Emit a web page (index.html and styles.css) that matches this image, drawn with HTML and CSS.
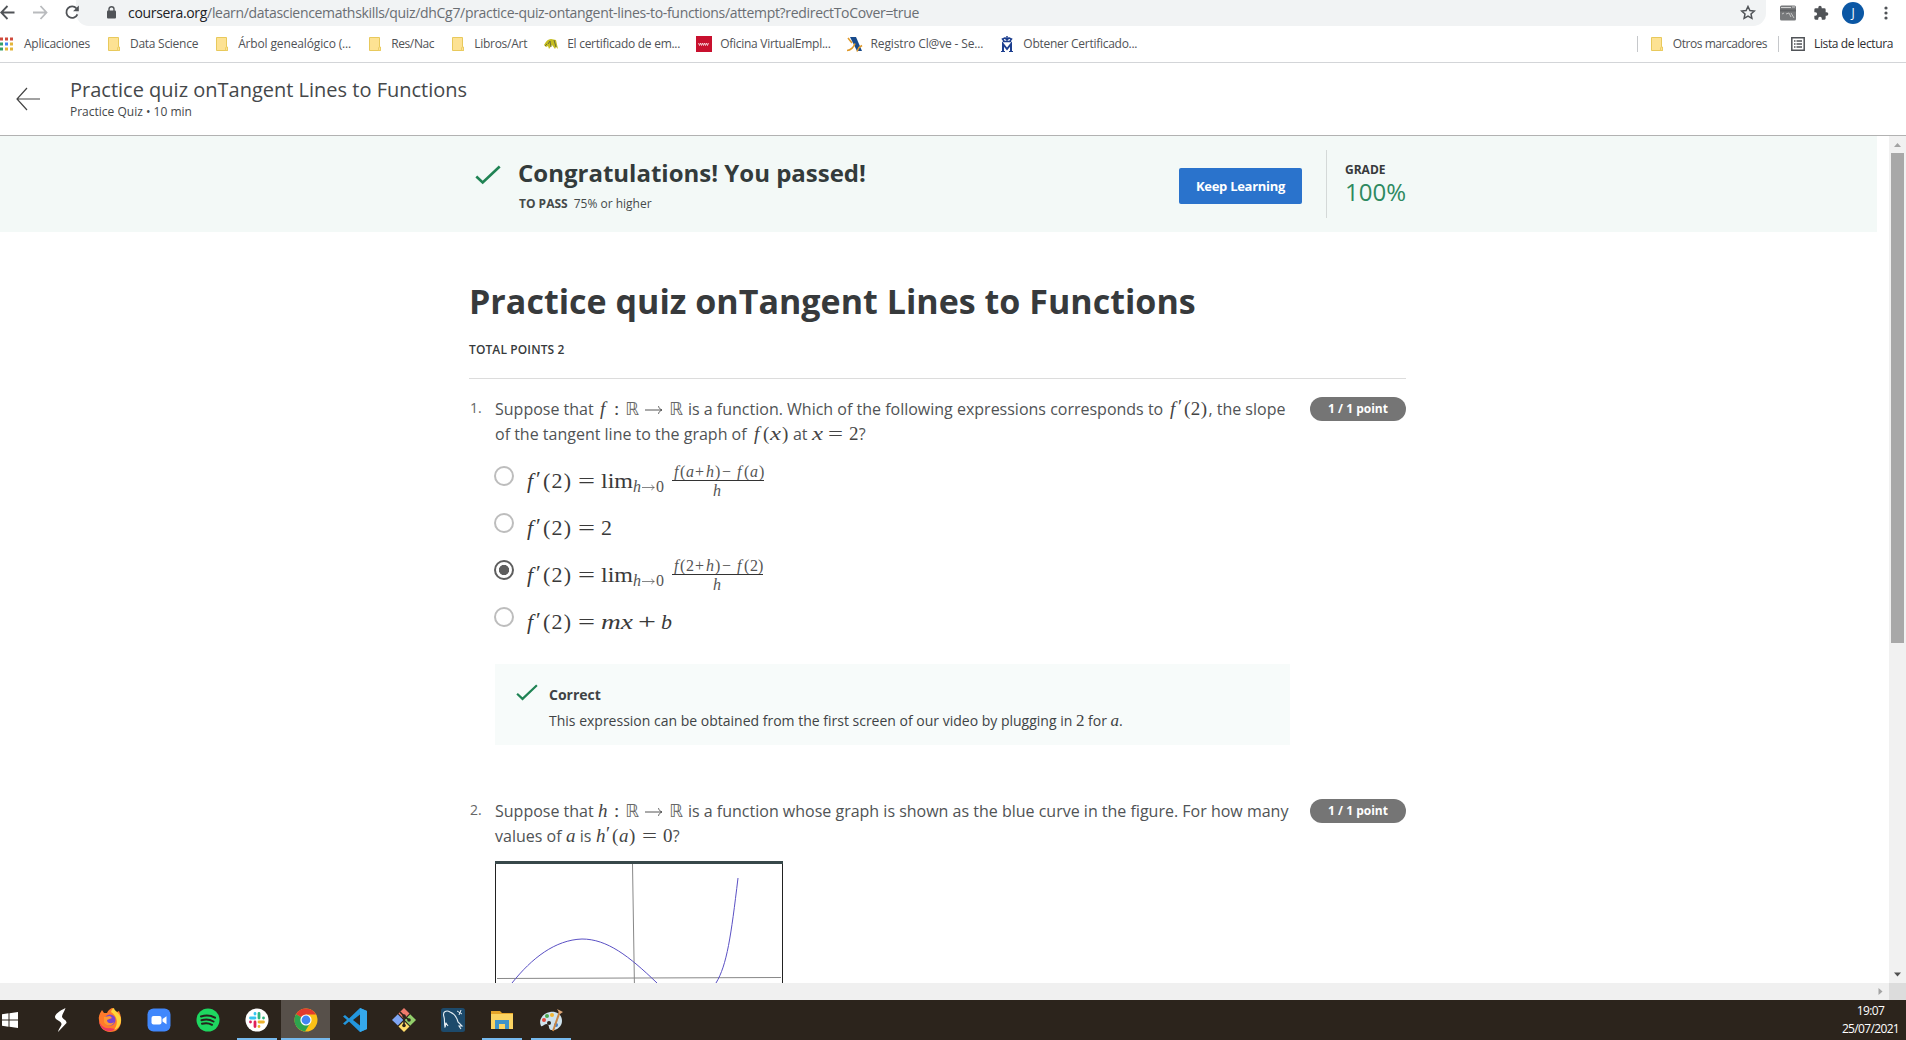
FILE: index.html
```html
<!DOCTYPE html>
<html lang="es">
<head>
<meta charset="utf-8">
<title>Practice quiz onTangent Lines to Functions</title>
<link rel="stylesheet" href="styles.css">
</head>
<body>
<svg class="defs" width="0" height="0">
  <symbol id="folder" viewBox="0 0 16 16"><path d="M2.500 1.500h10v9.500h1v3.500h-11z" fill="#fde293" stroke="#e8c95c"/><path d="M11.500 14.500v-2.500l1-1.500 1 1.500v2.500z" fill="#fde293" stroke="#e8c95c" stroke-width=".8"/></symbol>
  <symbol id="check" viewBox="0 0 26 20"><path d="M1.300 11.500l6.400 6L24.700 1.500" fill="none" stroke="#1f8354" stroke-width="2.600"/></symbol>
  <symbol id="to" viewBox="0 0 18 10"><path d="M0 5h17M13.500 1.200c.5 2 1.800 3.200 3.500 3.800-1.700.6-3 1.800-3.500 3.800" fill="none" stroke="#555" stroke-width="1"/></symbol>
</svg>

<header class="chrome">
  <div class="toolbar">
    <svg class="nav" width="76" height="26" viewBox="0 0 76 26" fill="none" stroke="#505357" stroke-width="1.800">
      <path d="M14.500 12.500H1.500M7.500 6L1.200 12.500l6.300 6.500"/>
      <path d="M33 12.500h13M40.500 6l6 6.500-6 6.500" stroke="#b9bbbe"/>
      <path d="M76.500 8.500A5.700 5.700 0 1 0 77.400 14.300"/>
      <path d="M78.800 5.500v5.700h-5.700z" fill="#505357" stroke="none"/>
    </svg>
    <div class="omnibox">
      <svg width="9" height="13" viewBox="0 0 9 13"><rect x="0" y="4.500" width="9" height="8" rx="1" fill="#505357"/><path d="M2 5V3a2.500 2.300 0 0 1 5 0v2" fill="none" stroke="#505357" stroke-width="1.400"/></svg>
      <span class="url"><b>coursera.org</b>/learn/datasciencemathskills/quiz/dhCg7/practice-quiz-ontangent-lines-to-functions/attempt?redirectToCover=true</span>
      <svg class="star" width="16" height="15" viewBox="0 0 16 15"><path d="M8 1.500l1.900 4 4.400.5-3.300 3 .9 4.400L8 11.200l-3.900 2.200.9-4.400-3.300-3 4.400-.5z" fill="none" stroke="#505357" stroke-width="1.500"/></svg>
    </div>
    <div class="tools">
      <svg width="16" height="16" viewBox="0 0 16 16"><rect y=".5" width="16" height="15" rx="1.500" fill="#77797b"/><path d="M1 2.500h10M12 2h3" stroke="#d2d2d2"/><path d="M0 4.500h16v2H0z" fill="#606265"/><path d="M6 9l3-1 2 4M2 9l2-1M11 8l3 5" fill="none" stroke="#c4c4c4" stroke-width="1"/></svg>
      <svg width="16" height="16" viewBox="0 0 24 24"><path fill="#505357" d="M20.500 11H19V7a2 2 0 0 0-2-2h-4V3.500a2.500 2.500 0 0 0-5 0V5H4a2 2 0 0 0-2 2v3.800h1.500a2.700 2.700 0 0 1 0 5.400H2V20a2 2 0 0 0 2 2h3.800v-1.500a2.700 2.700 0 0 1 5.400 0V22H17a2 2 0 0 0 2-2v-4h1.500a2.500 2.500 0 0 0 0-5z"/></svg>
      <span class="avatar">J</span>
      <svg class="dots" width="4" height="16" viewBox="0 0 4 16" fill="#505357"><circle cx="2" cy="3" r="1.600"/><circle cx="2" cy="8" r="1.600"/><circle cx="2" cy="13" r="1.600"/></svg>
    </div>
  </div>
  <nav class="bookmarks">
    <a class="bm"><svg width="16" height="16" viewBox="0 0 16 16"><g fill="#d04a3c"><path d="M0 1.500h3v3H0zM5 1.500h3v3H5zM10 1.500h3v3h-3z"/></g><path d="M0 6.500h3v3H0z" fill="#34a06a"/><path d="M5 6.500h3v3H5z" fill="#4285f4"/><path d="M10 6.500h3v3h-3zM5 11.500h3v3H5zM10 11.500h3v3h-3z" fill="#e3b53a"/><path d="M0 11.500h3v3H0z" fill="#34a06a"/></svg><span>Aplicaciones</span></a>
    <a class="bm"><svg width="16" height="16"><use href="#folder"/></svg><span>Data Science</span></a>
    <a class="bm loose"><svg width="16" height="16"><use href="#folder"/></svg><span>Árbol genealógico (...</span></a>
    <a class="bm tight"><svg width="16" height="16"><use href="#folder"/></svg><span>Res/Nac</span></a>
    <a class="bm"><svg width="16" height="16"><use href="#folder"/></svg><span>Libros/Art</span></a>
    <a class="bm"><svg width="16" height="16" viewBox="0 0 16 16"><path d="M1 9c2-4 4-6 7-6l5 1 2 9-2-2-1 2-3-4-3 4-1-3-2 1z" fill="#c5bd1e"/><path d="M5 8l2-3 1 6M11 4l2 7M2 10l2-2" stroke="#6d6d3b" fill="none"/></svg><span>El certificado de em...</span></a>
    <a class="bm"><svg width="16" height="16" viewBox="0 0 16 16"><path fill="#c8102e" d="M0 0h16v16H0z"/><path d="M2.500 7l1 2.500 1-2.500 1 2.500 1-2.500 1 2.500 1-2.500 1 2.500 1-2.500 1 2.500 1-2.500" fill="none" stroke="#fff" stroke-width=".7"/></svg><span>Oficina VirtualEmpl...</span></a>
    <a class="bm loose"><svg width="16" height="16" viewBox="0 0 16 16"><path d="M3 1h6l6 14h-5z" fill="#174a8c"/><path d="M1 2l4 5M0 14.500c4 0 7-4 8-7M10 15.500l2-4 3-2" stroke="#e09a2c" stroke-width="1.600" fill="none"/></svg><span>Registro Cl@ve - Se...</span></a>
    <a class="bm"><svg width="16" height="16" viewBox="0 0 16 16" fill="none" stroke="#1d3f8f"><path d="M4 5.500h8M5 5L3.500 3 6 2l2 2 2-2 2.500 1L11 5M8 0v4" stroke-width="1.500"/><path d="M4 15V8l4 5 4-5v7" stroke-width="2"/><path d="M2 15.500h4M10 15.500h4"/></svg><span>Obtener Certificado...</span></a>
    <div class="bm-right">
      <i></i><a class="bm otros"><svg width="16" height="16"><use href="#folder"/></svg><span>Otros marcadores</span></a>
      <i></i><a class="bm tight dark"><svg width="16" height="16" viewBox="0 0 16 16"><path d="M1.800 1.800h12.400v12.400H1.800z" fill="none" stroke="#505357" stroke-width="1.500"/><path d="M4 5h1.500M6.500 5H12M4 8h1.500M6.500 8H12M4 11h1.500M6.500 11H12" stroke="#505357" stroke-width="1.600"/></svg><span>Lista de lectura</span></a>
    </div>
  </nav>
</header>

<header class="quizbar">
  <svg width="24" height="24" viewBox="0 0 24 24" fill="none" stroke="#444" stroke-width="1.200"><path d="M24 12H1M11 1L1 12l10 11"/></svg>
  <div>
    <div class="qb-title">Practice quiz onTangent Lines to Functions</div>
    <div class="qb-sub">Practice Quiz • 10 min</div>
  </div>
</header>

<div class="viewport">
  <main class="page">
    <section class="banner">
      <div class="banner-in">
        <svg class="bcheck" width="26" height="20"><use href="#check"/></svg>
        <div class="bmsg">
          <div class="congrats">Congratulations! You passed!</div>
          <div class="topass"><b>TO PASS</b><span>75% or higher</span></div>
        </div>
        <button class="keep">Keep Learning</button>
        <div class="grade"><b>GRADE</b><span>100%</span></div>
      </div>
    </section>

    <div class="content">
      <h1>Practice quiz onTangent Lines to Functions</h1>
      <div class="total">TOTAL POINTS 2</div>

      <section class="question">
        <span class="num">1.</span>
        <div class="qbody">
          <div class="line">Suppose that <svg class="m" width="86" height="22"><text class="i" x="2" y="16">f</text><text x="16" y="16">:</text><text class="bb" x="27" y="16" textLength="14" lengthAdjust="spacingAndGlyphs">ℝ</text><use href="#to" x="47" y="6" width="18" height="10"/><text class="bb" x="71" y="16" textLength="14" lengthAdjust="spacingAndGlyphs">ℝ</text></svg> is a function. Which of the following expressions corresponds to <svg class="m" width="41" height="22"><text class="i" x="3" y="16">f</text><text x="11" y="14">′</text><text x="17" y="16" textLength="23">(2)</text></svg>, the slope</div>
          <div class="line">of the tangent line to the graph of <svg class="m" width="38" height="22"><text class="i" x="3" y="16">f</text><text x="12" y="16">(</text><text class="i" x="19" y="16" textLength="11" lengthAdjust="spacingAndGlyphs">x</text><text x="31" y="16">)</text></svg> at <svg class="m" width="47" height="22"><text class="i" x="0" y="16" textLength="11" lengthAdjust="spacingAndGlyphs">x</text><text x="16" y="16" textLength="15" lengthAdjust="spacingAndGlyphs">=</text><text x="37" y="16">2</text></svg>?</div>
          <ul class="options">
            <li><span class="radio"></span><svg class="math" width="250" height="40"><text class="i" x="3" y="26">f</text><text x="12" y="24">′</text><text x="19" y="26" textLength="28">(2)</text><text x="54" y="26" textLength="17" lengthAdjust="spacingAndGlyphs">=</text><text x="77" y="26" textLength="32" lengthAdjust="spacingAndGlyphs">lim</text><g class="s"><text class="i" x="109" y="30">h</text><use href="#to" x="118" y="21" width="13" height="9"/><text x="132" y="30">0</text><text class="i" x="150" y="15">f</text><text x="156" y="15">(</text><text class="i" x="162" y="15">a</text><text x="171" y="15">+</text><text class="i" x="182" y="15">h</text><text x="191" y="15">)</text><text x="198" y="15">−</text><text class="i" x="213" y="15">f</text><text x="220" y="15">(</text><text class="i" x="226" y="15">a</text><text x="235" y="15">)</text><text class="i" x="189" y="34">h</text></g><path d="M148 18.500h92" stroke="#333"/></svg></li>
            <li><span class="radio"></span><svg class="math" width="250" height="40"><text class="i" x="3" y="26">f</text><text x="12" y="24">′</text><text x="19" y="26" textLength="28">(2)</text><text x="54" y="26" textLength="17" lengthAdjust="spacingAndGlyphs">=</text><text x="77" y="26">2</text></svg></li>
            <li><span class="radio on"></span><svg class="math" width="250" height="40"><text class="i" x="3" y="26">f</text><text x="12" y="24">′</text><text x="19" y="26" textLength="28">(2)</text><text x="54" y="26" textLength="17" lengthAdjust="spacingAndGlyphs">=</text><text x="77" y="26" textLength="32" lengthAdjust="spacingAndGlyphs">lim</text><g class="s"><text class="i" x="109" y="30">h</text><use href="#to" x="118" y="21" width="13" height="9"/><text x="132" y="30">0</text><text class="i" x="150" y="15">f</text><text x="156" y="15">(</text><text x="162" y="15">2</text><text x="171" y="15">+</text><text class="i" x="182" y="15">h</text><text x="191" y="15">)</text><text x="198" y="15">−</text><text class="i" x="213" y="15">f</text><text x="220" y="15">(</text><text x="226" y="15">2</text><text x="234" y="15">)</text><text class="i" x="189" y="34">h</text></g><path d="M148 18.500h91" stroke="#333"/></svg></li>
            <li><span class="radio"></span><svg class="math" width="250" height="40"><text class="i" x="3" y="26">f</text><text x="12" y="24">′</text><text x="19" y="26" textLength="28">(2)</text><text x="54" y="26" textLength="17" lengthAdjust="spacingAndGlyphs">=</text><text class="i" x="77" y="26" textLength="32" lengthAdjust="spacingAndGlyphs">mx</text><text x="114" y="26" textLength="18" lengthAdjust="spacingAndGlyphs">+</text><text class="i" x="137" y="26">b</text></svg></li>
          </ul>
          <div class="feedback">
            <svg width="22" height="17" viewBox="0 0 26 20" preserveAspectRatio="none"><use href="#check" width="26" height="20"/></svg>
            <div><b>Correct</b><p>This expression can be obtained from the first screen of our video by plugging in <span class="mt">2</span> for <span class="mt i">a</span>.</p></div>
          </div>
        </div>
        <span class="badge">1 / 1 point</span>
      </section>

      <section class="question">
        <span class="num">2.</span>
        <div class="qbody">
          <div class="line">Suppose that <svg class="m" width="86" height="22"><text class="i" x="0" y="16">h</text><text x="16" y="16">:</text><text class="bb" x="27" y="16" textLength="14" lengthAdjust="spacingAndGlyphs">ℝ</text><use href="#to" x="47" y="6" width="18" height="10"/><text class="bb" x="71" y="16" textLength="14" lengthAdjust="spacingAndGlyphs">ℝ</text></svg> is a function whose graph is shown as the blue curve in the figure. For how many</div>
          <div class="line">values of <svg class="m" width="10" height="22"><text class="i" x="0" y="16">a</text></svg> is <svg class="m" width="77" height="22"><text class="i" x="0" y="16">h</text><text x="10" y="14">′</text><text x="16" y="16">(</text><text class="i" x="23" y="16">a</text><text x="33" y="16">)</text><text x="46" y="16" textLength="15" lengthAdjust="spacingAndGlyphs">=</text><text x="67" y="16">0</text></svg>?</div>
          <svg class="figure" width="288" height="160" viewBox="0 0 288 160" fill="none">
            <path d="M.5 0v160M287.500 0v160" stroke="#222"/><path d="M0 1.500h288" stroke="#38484a" stroke-width="3"/>
            <path d="M137.500 3l2.500 157" stroke="#888"/><path d="M2 117.500l284-1" stroke="#888"/>
            <path d="M17 122C37 97 60 79 87 78C112 78 134 95 162 122M221 122C232 104 236 75 243 17" stroke="#5a50c4"/>
          </svg>
        </div>
        <span class="badge">1 / 1 point</span>
      </section>
    </div>
  </main>
  <div class="vscroll"><svg width="17" height="17"><path d="M5 11l3.500-4 3.500 4z" fill="#a3a3a3"/></svg><div class="thumb"></div><svg class="down" width="17" height="17"><path d="M5 6.500l3.500 4 3.500-4z" fill="#505050"/></svg></div>
  <div class="hscroll"><svg width="17" height="17"><path d="M6.500 5l4 3.500-4 3.500z" fill="#a3a3a3"/></svg></div>
  <div class="corner"></div>
</div>

<footer class="taskbar">
  <span class="task win"><svg width="24" height="24" viewBox="0 0 24 24"><path fill="#fff" d="M2 6.300l6.500-1v6.200H2zM9.500 5.200L18 4v7.500H9.500zM2 12.500h6.500v6.200L2 17.700zM9.500 12.500H18V20l-8.500-1.200z"/></svg></span>
  <span class="task"><svg width="24" height="24" viewBox="0 0 24 24" fill="#fff"><path d="M16.500 0C10 3 6 6.500 6 9c0 3 6.500 4 6.500 7 0 2-2.500 4-3.500 8l8.500-9C18 12 13 11 13 8.500c0-2 2.500-5 3.500-8.500z"/></svg></span>
  <span class="task"><svg width="24" height="24" viewBox="0 0 24 24"><path fill="#ff7a2b" d="M1 12C0 7 3 4 4 2l2 3 3 0c1-3 4-5 6-5 0 3 3 3 4 4l2-1c5 11 1 21-9 21C6 24 1 19 1 12z"/><path fill="#ffd43b" d="M13 4c1-3 2-4 3-4 0 3 7 5 7 12 0 6-4 9-7 10 5-7 3-14-3-18z"/><path fill="#f03a5f" d="M1 13c2 5 6 8 11 7l5 1c-6 5-15 1-16-8z"/><circle cx="12" cy="12" r="5.500" fill="#7a45cf"/><path d="M6 9l6-1 2 2-5 2c0 4 5 4 7 2-1 4-8 5-10 0z" fill="#ff9830"/></svg></span>
  <span class="task"><svg width="24" height="24" viewBox="0 0 24 24"><rect x=".5" y=".5" width="23" height="23" rx="6" fill="#4087fc"/><rect x="4.500" y="8" width="10" height="8.500" rx="2" fill="#fff"/><path d="M15.500 11l4-2.800v8l-4-2.700z" fill="#fff"/></svg></span>
  <span class="task"><svg width="24" height="24" viewBox="0 0 24 24"><circle cx="12" cy="12" r="11.500" fill="#1ed760"/><path d="M5 8.500c5-1.500 10-1 14 1.200M5.500 12.300c4.500-1.300 8.500-.8 12 1.200M6 15.800c4-1 7-.7 10 1" fill="none" stroke="#26221c" stroke-width="2" stroke-linecap="round"/></svg></span>
  <span class="task open"><svg width="24" height="24" viewBox="0 0 24 24" stroke-width="2.800" stroke-linecap="round" fill="none"><circle cx="12" cy="12" r="11.500" fill="#fff" stroke="none"/><path d="M10 5.500V6M5.500 10H10" stroke="#36c5f0"/><path d="M14 5.500V10M18.500 10h.01" stroke="#2eb67d"/><path d="M14 14h4.500M14 18.500h.01" stroke="#ecb22e"/><path d="M5.500 14h.01M10 14v4.500" stroke="#e01e5a"/></svg></span>
  <span class="task open active"><svg width="24" height="24" viewBox="0 0 24 24"><circle cx="12" cy="12" r="11.500" fill="#fbc116"/><path d="M12 12L2 6.200A11.500 11.500 0 0 1 22 6.500H12z" fill="#e33b2e"/><path d="M2 6.200A11.500 11.500 0 0 0 11 23.500l5.500-9L12 12z" fill="#2da44e"/><circle cx="12" cy="12" r="5.600" fill="#fff"/><circle cx="12" cy="12" r="4.400" fill="#4285f4"/></svg></span>
  <span class="task"><svg width="24" height="24" viewBox="0 0 24 24"><path d="M17 0l7 3v18l-7 3L6 13.500 2 17l-2-1.500L4 12 0 8.500 2 7l4 3.500z" fill="#2396dd"/><path d="M17 6.500v11L10 12z" fill="#2c241c"/><path d="M17 0l7 3v18l-7 3z" fill="#35a9ee"/></svg></span>
  <span class="task"><svg width="24" height="24" viewBox="0 0 24 24"><path fill="#f07b6c" d="M12 0l5.500 5.500L12 11 6.500 5.500z"/><path fill="#7fa6f5" d="M5.800 6.300L11.300 12l-5.500 5.500L0 12z"/><path fill="#93cf6b" d="M18.200 6.300L24 12l-5.800 5.700-5.500-5.700z"/><path fill="#ffdc6b" d="M12 13l5.500 5.500L12 24l-5.500-5.500z"/><path d="M8 4l4 4v10M12 8l5 4" stroke="#2c241c" stroke-width="1.600" fill="none"/><circle cx="12" cy="17.500" r="1.800" fill="#2c241c"/><circle cx="17" cy="12" r="1.800" fill="#2c241c"/><circle cx="12" cy="8" r="1.800" fill="#2c241c"/></svg></span>
  <span class="task"><svg width="24" height="24" viewBox="0 0 24 24"><rect width="24" height="24" rx="2.500" fill="#1d4a6b"/><path d="M7 18l-2-3c-1 1 0 3-1 4C3 15 4 12 3 9 1 3 6 2 9 4c5 2 7 6 8 10l4 4-3 0 2 3" fill="none" stroke="#e6eef4" stroke-width="1.100"/><path d="M16 3l5 3M20 2l-2 5" stroke="#e6eef4"/></svg></span>
  <span class="task open"><svg width="24" height="24" viewBox="0 0 24 24"><path d="M1 3h9l2 2h11v16H1z" fill="#e6a52a"/><path d="M1 6h22v15H1z" fill="#fcd462"/><path d="M5 12h14v9h-4v-5H9v5H5z" fill="#3f93c9"/></svg></span>
  <span class="task open"><svg width="24" height="24" viewBox="0 0 24 24"><path d="M11 4c7-1 12 3 12 9s-6 10-11 9c-3-1-1-5-4-6-3 0-4 3-6 2C-1 12 4 5 11 4z" fill="#cfe3ee"/><circle cx="5" cy="12" r="2" fill="#e24b3c"/><circle cx="8" cy="8" r="2" fill="#4aa84e"/><circle cx="13" cy="7" r="2" fill="#f2b632"/><circle cx="17" cy="17" r="2" fill="#3d7fd0"/><circle cx="10" cy="15" r="2" fill="#2c241c"/><path d="M21 3l-7 20" stroke="#c98644" stroke-width="2"/><path d="M18 1l6 3-3 2z" fill="#e0a878"/></svg></span>
  <div class="clock"><span>19:07</span><span>25/07/2021</span></div>
</footer>
</body>
</html>
```
FILE: styles.css
```css
* { box-sizing: border-box; }
body { margin: 0; width: 1906px; height: 1040px; overflow: hidden; display: flex; flex-direction: column; background: #fff; color: #373a3c; font-family: "Open Sans", "Noto Sans", sans-serif; }
svg { display: block; flex: none; }
.defs { position: absolute; }

.chrome { height: 63px; border-bottom: 1px solid #d3d5d8; white-space: nowrap; }
.toolbar { display: flex; height: 26px; }
.nav { overflow: visible; z-index: 1; }
.omnibox { width: 1690px; height: 26px; background: #f1f3f4; border-radius: 0 0 13px 13px; display: flex; align-items: center; padding: 0 10px 1px 31px; font-size: 14px; }
.omnibox .url { margin-left: 12px; color: #6a6e73; letter-spacing: -.32px; }
.url b { font-weight: 400; color: #202124; }
.star { margin-left: auto; }
.tools { display: flex; align-items: center; padding-left: 14px; height: 25px; }
.tools svg + svg { margin-left: 17px; }
.avatar { width: 22px; height: 22px; border-radius: 50%; background: #0b57a4; color: #fff; font-size: 12px; line-height: 22px; text-align: center; margin-left: 13px; }
.tools .dots { margin-left: 20px; }
.bookmarks { display: flex; gap: 16px; height: 35px; align-items: center; font-size: 12px; color: #505256; letter-spacing: -.27px; }
.bm { display: flex; gap: 8px; align-items: center; }
.loose { letter-spacing: -.14px; }
.tight { letter-spacing: -.38px; }
.otros { letter-spacing: -.46px; }
.bm-right { margin-left: auto; display: flex; align-items: center; gap: 11px; padding-right: 13px; }
.bm-right i { width: 1px; height: 16px; background: #c6c8cb; }
.dark { color: #2c2d30; }

.quizbar { height: 73px; border-bottom: 1px solid #b2b2b2; display: flex; align-items: center; padding-left: 16px; gap: 30px; }
.qb-title { font-size: 20px; line-height: 24px; color: #45484a; }
.qb-sub { font-size: 12px; line-height: 18px; padding-top: 1px; height: 18px; color: #45484a; }

.viewport { height: 864px; display: grid; grid-template: 847px 17px / 1889px 17px; }
.page { overflow: hidden; padding-right: 12px; }
.banner { background: #f3f9f7; height: 96px; }
.banner-in { width: 937px; margin-left: 469px; display: flex; }
.bcheck { margin: 29px 0 0 6px; }
.bmsg { margin: 20px 0 0 17px; flex: 1; }
.congrats { font-size: 24px; font-weight: 700; line-height: 34px; color: #333b3b; }
.topass { display: flex; font-size: 12px; line-height: 18px; gap: 6px; margin: 5px 0 0 1px; color: #454a4a; }
.keep { width: 123px; height: 36px; margin-top: 32px; border: 0; border-radius: 2px; background: #2a73cc; color: #fff; font: 700 13px "Open Sans", sans-serif; letter-spacing: -.29px; padding: 0; }
.grade { margin: 14px 0 0 24px; height: 68px; width: 80px; border-left: 1px solid #d4d9d8; padding: 11px 0 0 18px; font-size: 12px; line-height: 17px; display: flex; flex-direction: column; }
.grade span { font-size: 24px; line-height: 28px; color: #2e8a61; }
.content { width: 937px; margin-left: 469px; }
h1 { margin: 0; padding-top: 45px; font-size: 34px; line-height: 48px; font-weight: 700; color: #373a3c; letter-spacing: .02px; }
.total { font-size: 12px; font-weight: 600; line-height: 18px; letter-spacing: .12px; margin-top: 16px; padding: 0; height: 38px; border-bottom: 1px solid #dcdcdc; }
.question { display: flex; height: 402px; }
.num { width: 26px; padding-left: 1px; font-size: 14px; line-height: 20px; margin-top: 19px; color: #666; }
.qbody { width: 795px; padding-top: 18px; flex: none; }
.line { font-size: 16px; line-height: 25px; white-space: nowrap; height: 25px; color: #505355; }
svg.m { display: inline-block; vertical-align: -6px; overflow: visible; font: 19px "Liberation Serif", serif; fill: #444; }
.i { font-style: italic; }
svg .bb { font: 18px "DejaVu Sans", sans-serif; fill: #666; }
.options { list-style: none; margin: 13px 0 0; padding: 0; }
.options li { display: flex; height: 47px; }
.radio { width: 20px; height: 20px; border: 2px solid #bdbdbd; border-radius: 50%; margin: 6px 10px 0 -1px; flex: none; }
.radio.on { border-color: #5e5e5e; background: radial-gradient(circle, #5e5e5e 4.800px, #fff 5.400px); }
.math { font: 22px "Liberation Serif", serif; fill: #3a3a3a; overflow: visible; margin-top: 2px; }
.math .s { font-size: 16px; fill: #555; }
.feedback { height: 81px; margin-top: 16px; background: #f7fbfa; display: flex; padding: 20px 0 0 21px; gap: 11px; font-size: 14px; color: #404345; }
.feedback b { display: block; line-height: 20px; padding-top: 1px; }
.feedback p { margin: 6px 0 0; line-height: 20px; height: 20px; white-space: nowrap; }
.mt { font: 17px/1 "Liberation Serif", serif; }
.mt.i { font-style: italic; }
.badge { width: 96px; height: 24px; border-radius: 12px; margin: 18px 0 0 20px; background: #757575; color: #fff; font-size: 12px; font-weight: 700; line-height: 24px; text-align: center; flex: none; }
.figure { margin-top: 12px; }

.vscroll { background: #f1f1f1; display: flex; flex-direction: column; align-items: center; }
.thumb { width: 13px; height: 490px; background: #a8a8a8; }
.down { margin-top: auto; }
.hscroll { background: #f0f0f0; display: flex; justify-content: flex-end; }
.corner { background: #dcdcdc; }

.taskbar { height: 40px; background: #2c241c; display: flex; }
.task { width: 49px; display: flex; justify-content: center; padding-top: 8px; height: 40px; }
.win { width: 36px; justify-content: flex-start; }
.open { background: linear-gradient(#76b9ed, #76b9ed) 50% 100% / 40px 2px no-repeat; }
.active { background: linear-gradient(#76b9ed, #76b9ed) 50% 100% / 49px 2px no-repeat #57504a; }
.clock { margin-left: auto; width: 71px; color: #fff; font-size: 12px; line-height: 18px; letter-spacing: -.65px; display: flex; flex-direction: column; align-items: center; padding-top: 2px; }
```
